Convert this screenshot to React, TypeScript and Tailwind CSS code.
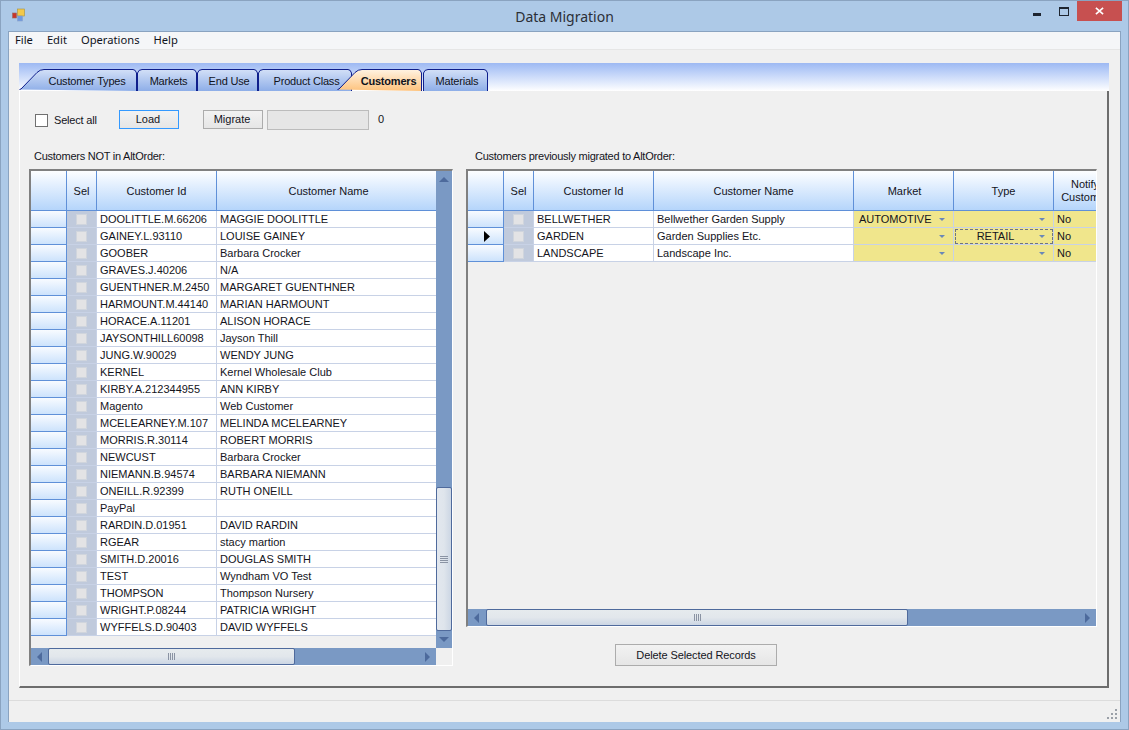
import { useId } from 'react'

const sans = "font-['Liberation_Sans',Arial,sans-serif]"

type Row = [string, string]

const leftRows: Row[] = [
  ['DOOLITTLE.M.66206', 'MAGGIE DOOLITTLE'],
  ['GAINEY.L.93110', 'LOUISE GAINEY'],
  ['GOOBER', 'Barbara Crocker'],
  ['GRAVES.J.40206', 'N/A'],
  ['GUENTHNER.M.2450', 'MARGARET GUENTHNER'],
  ['HARMOUNT.M.44140', 'MARIAN HARMOUNT'],
  ['HORACE.A.11201', 'ALISON HORACE'],
  ['JAYSONTHILL60098', 'Jayson Thill'],
  ['JUNG.W.90029', 'WENDY JUNG'],
  ['KERNEL', 'Kernel Wholesale Club'],
  ['KIRBY.A.212344955', 'ANN KIRBY'],
  ['Magento', 'Web Customer'],
  ['MCELEARNEY.M.107', 'MELINDA MCELEARNEY'],
  ['MORRIS.R.30114', 'ROBERT MORRIS'],
  ['NEWCUST', 'Barbara Crocker'],
  ['NIEMANN.B.94574', 'BARBARA NIEMANN'],
  ['ONEILL.R.92399', 'RUTH ONEILL'],
  ['PayPal', ''],
  ['RARDIN.D.01951', 'DAVID RARDIN'],
  ['RGEAR', 'stacy martion'],
  ['SMITH.D.20016', 'DOUGLAS SMITH'],
  ['TEST', 'Wyndham VO Test'],
  ['THOMPSON', 'Thompson Nursery'],
  ['WRIGHT.P.08244', 'PATRICIA WRIGHT'],
  ['WYFFELS.D.90403', 'DAVID WYFFELS'],
]

const rightRows = [
  { id: 'BELLWETHER', name: 'Bellwether Garden Supply', market: 'AUTOMOTIVE', type: '', current: false },
  { id: 'GARDEN', name: 'Garden Supplies Etc.', market: '', type: 'RETAIL', current: true },
  { id: 'LANDSCAPE', name: 'Landscape Inc.', market: '', type: '', current: false },
]

function Tab({ label, width, slant, selected, className }: { label: string; width: number; slant?: boolean; selected?: boolean; className?: string }) {
  const id = useId()
  const h = 22
  const d = slant
    ? `M0.5 ${h - 1.5} L2 ${h - 2} L18 3.5 Q21 0.5 25 0.5 L${width - 4} 0.5 Q${width - 1.5} 0.5 ${width - 0.5} 4 L${width - 0.5} ${h}`
    : `M0.5 ${h} L0.5 4 Q1.5 0.5 5 0.5 L${width - 4} 0.5 Q${width - 1.5} 0.5 ${width - 0.5} 4 L${width - 0.5} ${h}`
  return (
    <div className={`relative h-[22px] flex items-center justify-center shrink-0 ${className ?? ''}`} style={{ width }}>
      <svg className="absolute inset-0" width={width} height={h}>
        <defs>
          <linearGradient id={id} x1="0" y1="0" x2="0" y2="1">
            <stop offset="0" stopColor={selected ? '#fff3e2' : '#d3e0f7'} />
            <stop offset="1" stopColor={selected ? '#fdc27c' : '#8eaee8'} />
          </linearGradient>
        </defs>
        <path d={`${d} Z`} fill={`url(#${id})`} stroke="none" />
        <path d={d} fill="none" stroke="#0f1f8c" />
      </svg>
      <span className={`relative pt-[2px] text-[11px] tracking-[-0.2px] text-[#10131c] ${slant ? 'pl-[18px]' : 'pl-[3px]'} ${selected ? 'font-bold' : ''}`}>{label}</span>
    </div>
  )
}

function Arrow({ dir, className }: { dir: 'up' | 'down' | 'left' | 'right'; className?: string }) {
  const pts = { up: '0,6 5,1 10,6', down: '0,1 5,6 10,1', left: '6,0 1,5 6,10', right: '1,0 6,5 1,10' }[dir]
  const size = dir === 'up' || dir === 'down' ? 'w-[10px] h-[7px]' : 'w-[7px] h-[10px]'
  const box = dir === 'up' || dir === 'down' ? '0 0 10 7' : '0 0 7 10'
  return (
    <svg viewBox={box} className={`${size} ${className ?? ''}`}>
      <polygon points={pts} fill="#4d6a9c" />
    </svg>
  )
}

function HScroll({ thumb, inset }: { thumb: number; inset?: boolean }) {
  return (
    <div className="h-[17px] flex-1 flex items-center bg-[#7a99c4]">
      <div className="w-[17px] h-full flex items-center justify-center shrink-0"><Arrow dir="left" /></div>
      <div
        className={`h-full flex items-center justify-center border border-[#4f6a9c] rounded-[2px] bg-gradient-to-b from-[#e6ebee] via-[#e2e7ec] to-[#ccd6e4] shrink-0 ${inset ? 'ml-[1px]' : ''}`}
        style={{ width: thumb }}
      >
        <div className="flex gap-[1px]">
          {[0, 1, 2, 3].map((i) => <div key={i} className="w-[1px] h-[7px] bg-[#8a93a3]" />)}
        </div>
      </div>
      <div className="flex-1" />
      <div className="w-[17px] h-full flex items-center justify-center shrink-0"><Arrow dir="right" /></div>
    </div>
  )
}

function VScroll() {
  return (
    <div className="w-[16px] shrink-0 flex flex-col bg-[#7a99c4]">
      <div className="h-[17px] flex items-center justify-center"><Arrow dir="up" /></div>
      <div className="h-[299px]" />
      <div className="flex-1 flex items-center justify-center border border-[#4f6a9c] rounded-[2px] bg-gradient-to-r from-[#e2e7ee] via-[#dfe5ec] to-[#ccd6e4]">
        <div className="flex flex-col gap-[1px]">
          {[0, 1, 2, 3].map((i) => <div key={i} className="w-[8px] h-[1px] bg-[#8a93a3]" />)}
        </div>
      </div>
      <div className="h-[17px] flex items-center justify-center"><Arrow dir="down" /></div>
    </div>
  )
}

function HeaderCell({ width, children, className }: { width: number; children?: React.ReactNode; className?: string }) {
  return (
    <div
      className={`h-[40px] shrink-0 flex items-center justify-center pt-[1px] text-center leading-[13px] border-r border-b border-[#5f90d8] bg-gradient-to-b from-[#fdfeff] to-[#b5d5fb] overflow-hidden ${className ?? ''}`}
      style={{ width }}
    >
      {children}
    </div>
  )
}

function RowHead({ current }: { current?: boolean }) {
  return (
    <div className="w-[36px] h-[17px] shrink-0 flex items-center justify-center pl-[2px] border-r border-b border-[#5f90d8] bg-gradient-to-b from-[#f8fbff] to-[#cde3fc]">
      {current && (
        <svg viewBox="0 0 6 11" className="w-[6px] h-[11px]">
          <polygon points="0,0 6,5.5 0,11" fill="#000" />
        </svg>
      )}
    </div>
  )
}

function SelCell() {
  return (
    <div className="w-[30px] h-[17px] shrink-0 flex items-center justify-center bg-[#c0cadc] border-r border-b border-[#c8d2e6]">
      <div className="w-[11px] h-[11px] bg-[#e3e3e5] border border-[#d0d5dd]" />
    </div>
  )
}

function TextCell({ width, children, className }: { width: number; children?: React.ReactNode; className?: string }) {
  return (
    <div
      className={`h-[17px] shrink-0 flex items-center pl-[3px] border-r border-b border-[#c8d2e6] whitespace-nowrap overflow-hidden ${className ?? 'bg-white'}`}
      style={{ width }}
    >
      {children}
    </div>
  )
}

function ComboCell({ width, value, focus }: { width: number; value: string; focus?: boolean }) {
  return (
    <div className={`relative h-[17px] shrink-0 flex items-center bg-[#f0e68c] border-r border-b border-[#c8d2e6] ${focus ? 'outline-1 -outline-offset-2 outline-dashed outline-[#6f7480] justify-center pr-[16px]' : 'pl-[5px]'}`} style={{ width }}>
      {value}
      <svg viewBox="0 0 6 3" className="absolute right-[8px] top-[7px] w-[6px] h-[3px]">
        <polygon points="0,0 6,0 3,3" fill="#6a87b8" />
      </svg>
    </div>
  )
}

function LeftGrid() {
  return (
    <div className="w-[424px] h-[497px] flex flex-col border-l-2 border-t-2 border-l-[#808080] border-t-[#808080] border-r border-b border-r-white border-b-white bg-[#f0f0f0]">
      <div className="flex h-[477px]">
        <div className="w-[405px] shrink-0">
          <div className="flex">
            <HeaderCell width={36} />
            <HeaderCell width={30}>Sel</HeaderCell>
            <HeaderCell width={120}>Customer Id</HeaderCell>
            <HeaderCell width={219} className="border-r-0 pl-[4px]">Customer Name</HeaderCell>
          </div>
          {leftRows.map(([id, name]) => (
            <div key={id} className="flex">
              <RowHead />
              <SelCell />
              <TextCell width={120}>{id}</TextCell>
              <TextCell width={219} className="bg-white border-r-0">{name}</TextCell>
            </div>
          ))}
        </div>
        <VScroll />
      </div>
      <div className="flex">
        <HScroll thumb={247} />
        <div className="w-[16px]" />
      </div>
    </div>
  )
}

function RightGrid() {
  return (
    <div className="w-[631px] h-[458px] flex flex-col border-l-2 border-t-2 border-l-[#808080] border-t-[#808080] border-r border-b border-r-white border-b-white bg-[#f0f0f0]">
      <div className="h-[438px] overflow-hidden">
        <div className="flex w-[628px] overflow-hidden">
          <HeaderCell width={36} />
          <HeaderCell width={30}>Sel</HeaderCell>
          <HeaderCell width={120}>Customer Id</HeaderCell>
          <HeaderCell width={200}>Customer Name</HeaderCell>
          <HeaderCell width={100} className="pl-[2px]">Market</HeaderCell>
          <HeaderCell width={100}>Type</HeaderCell>
          <div className="w-[62px] h-[40px] shrink-0 flex items-center justify-center text-center leading-[13px] border-b border-[#5f90d8] bg-gradient-to-b from-[#fdfeff] to-[#b5d5fb]">
            <span>Notify<br />Customer</span>
          </div>
        </div>
        {rightRows.map((r) => (
          <div key={r.id} className="flex w-[628px] overflow-hidden">
            <RowHead current={r.current} />
            <SelCell />
            <TextCell width={120}>{r.id}</TextCell>
            <TextCell width={200}>{r.name}</TextCell>
            <ComboCell width={100} value={r.market} />
            <ComboCell width={100} value={r.type} focus={r.current} />
            <TextCell width={60} className="bg-[#f0e68c] border-r-0">No</TextCell>
          </div>
        ))}
      </div>
      <HScroll thumb={422} inset />
    </div>
  )
}

function Button({ children, primary, className }: { children: React.ReactNode; primary?: boolean; className?: string }) {
  return (
    <button className={`flex items-center justify-center border bg-gradient-to-b from-[#f2f2f2] to-[#e6e6e6] ${primary ? 'border-[#3399ff]' : 'border-[#acacac]'} ${className ?? ''}`}>
      {children}
    </button>
  )
}

export default function App() {
  return (
    <div className={`${sans} w-[1129px] h-[730px] overflow-hidden flex flex-col bg-[#adc9e7] border border-[#8aa3c0] text-[11px] text-[#14141c]`}>
      <div className="h-[30px] shrink-0 flex items-start">
        <div className="flex-1 pl-[10px] pt-[7px]">
          <svg viewBox="0 0 16 16" className="w-[16px] h-[16px]">
            <rect x="1.5" y="5" width="4" height="5" fill="#c8352b" stroke="#9a6a60" strokeWidth="0.6" />
            <rect x="6.5" y="1" width="7" height="7" fill="#f2c84a" stroke="#a8913c" strokeWidth="0.6" />
            <rect x="6.5" y="8" width="5" height="5" fill="#6f9be0" stroke="#8aa0c8" strokeWidth="0.6" />
          </svg>
        </div>
        <div className="pt-[5px] mr-[4px] font-['Noto_Sans',sans-serif] text-[14px] text-[#2b2f36]">Data Migration</div>
        <div className="flex-1 flex items-start justify-end pr-[6px]">
          <svg viewBox="0 0 8 3" className="w-[8px] h-[3px] mt-[12px] mr-[18px]"><rect width="8" height="3" fill="#1e2530" /></svg>
          <div className="w-[10px] h-[9px] mt-[6px] mr-[8px] border border-[#1e2530] border-t-[2px]" />
          <div className="w-[45px] h-[20px] bg-[#c75050] flex items-center justify-center">
            <svg viewBox="0 0 10 8" className="w-[9px] h-[8px]"><path d="M1 0.5 L9 7.5 M9 0.5 L1 7.5" stroke="#fff" strokeWidth="1.8" /></svg>
          </div>
        </div>
      </div>

      <div className="mx-[7px] mb-[7px] flex-1 flex flex-col bg-[#f0f0f0] border border-[#8aa3c0] border-b-0 min-h-0">
        <div className="h-[18px] shrink-0 flex items-center gap-[14px] pl-[6px] bg-[#f5f6f8] border-b border-[#e6e6e6] font-['Noto_Sans',sans-serif] text-[11.2px] text-[#10131c]">
          <span>File</span>
          <span>Edit</span>
          <span>Operations</span>
          <span>Help</span>
        </div>

        <div className="ml-[10px] mt-[13px] w-[1090px] h-[625px] flex flex-col shrink-0">
          <div className="h-[28px] shrink-0 flex items-end bg-gradient-to-b from-[#9db9f3] to-white">
            <Tab label="Customer Types" width={118} slant />
            <Tab label="Markets" width={60} />
            <Tab label="End Use" width={61} />
            <Tab label="Product Class" width={94} />
            <Tab label="Customers" width={85} slant selected className="-ml-[15px] z-10" />
            <Tab label="Materials" width={65} className="ml-[1px]" />
          </div>
          <div className="flex-1 pl-[9px] border-r-2 border-b-2 border-[#6d6d6d] border-l border-l-white">
            <div className="h-[19px] mt-[19px] flex items-center">
              <div className="ml-[6px] mt-[2px] w-[13px] h-[13px] border border-[#707070] bg-white" />
              <span className="ml-[6px] mt-[1px] w-[43px] whitespace-nowrap tracking-[-0.2px]">Select all</span>
              <Button primary className="ml-[22px] w-[60px] h-[19px] pr-[2px]">Load</Button>
              <Button className="ml-[24px] w-[60px] h-[19px] pr-[2px]">Migrate</Button>
              <div className="ml-[4px] w-[102px] h-[20px] bg-[#e6e6e6] border border-[#bcbcbc]" />
              <span className="ml-[9px]">0</span>
            </div>
            <div className="mt-[20px] flex gap-[13px]">
              <div className="w-[424px] shrink-0">
                <div className="h-[14px] mb-[6px] ml-[5px] flex items-center tracking-[-0.25px]">Customers NOT in AltOrder:</div>
                <LeftGrid />
              </div>
              <div className="w-[631px] shrink-0">
                <div className="h-[14px] mb-[6px] ml-[9px] flex items-center tracking-[-0.25px]">Customers previously migrated to AltOrder:</div>
                <RightGrid />
                <div className="mt-[17px] flex pl-[149px]">
                  <Button className="w-[162px] h-[22px] tracking-[-0.1px]">Delete Selected Records</Button>
                </div>
              </div>
            </div>
          </div>
        </div>

        <div className="flex-1 flex flex-col justify-end">
          <div className="h-[22px] relative border-t border-[#dcdcdc]">
            <svg viewBox="0 0 12 12" className="absolute right-[2px] bottom-[2px] w-[12px] h-[12px]">
              {[[9, 1], [5, 5], [9, 5], [1, 9], [5, 9], [9, 9]].map(([x, y]) => (
                <rect key={`${x}-${y}`} x={x} y={y} width="2" height="2" fill="#9aa0a8" />
              ))}
            </svg>
          </div>
        </div>
      </div>
    </div>
  )
}
